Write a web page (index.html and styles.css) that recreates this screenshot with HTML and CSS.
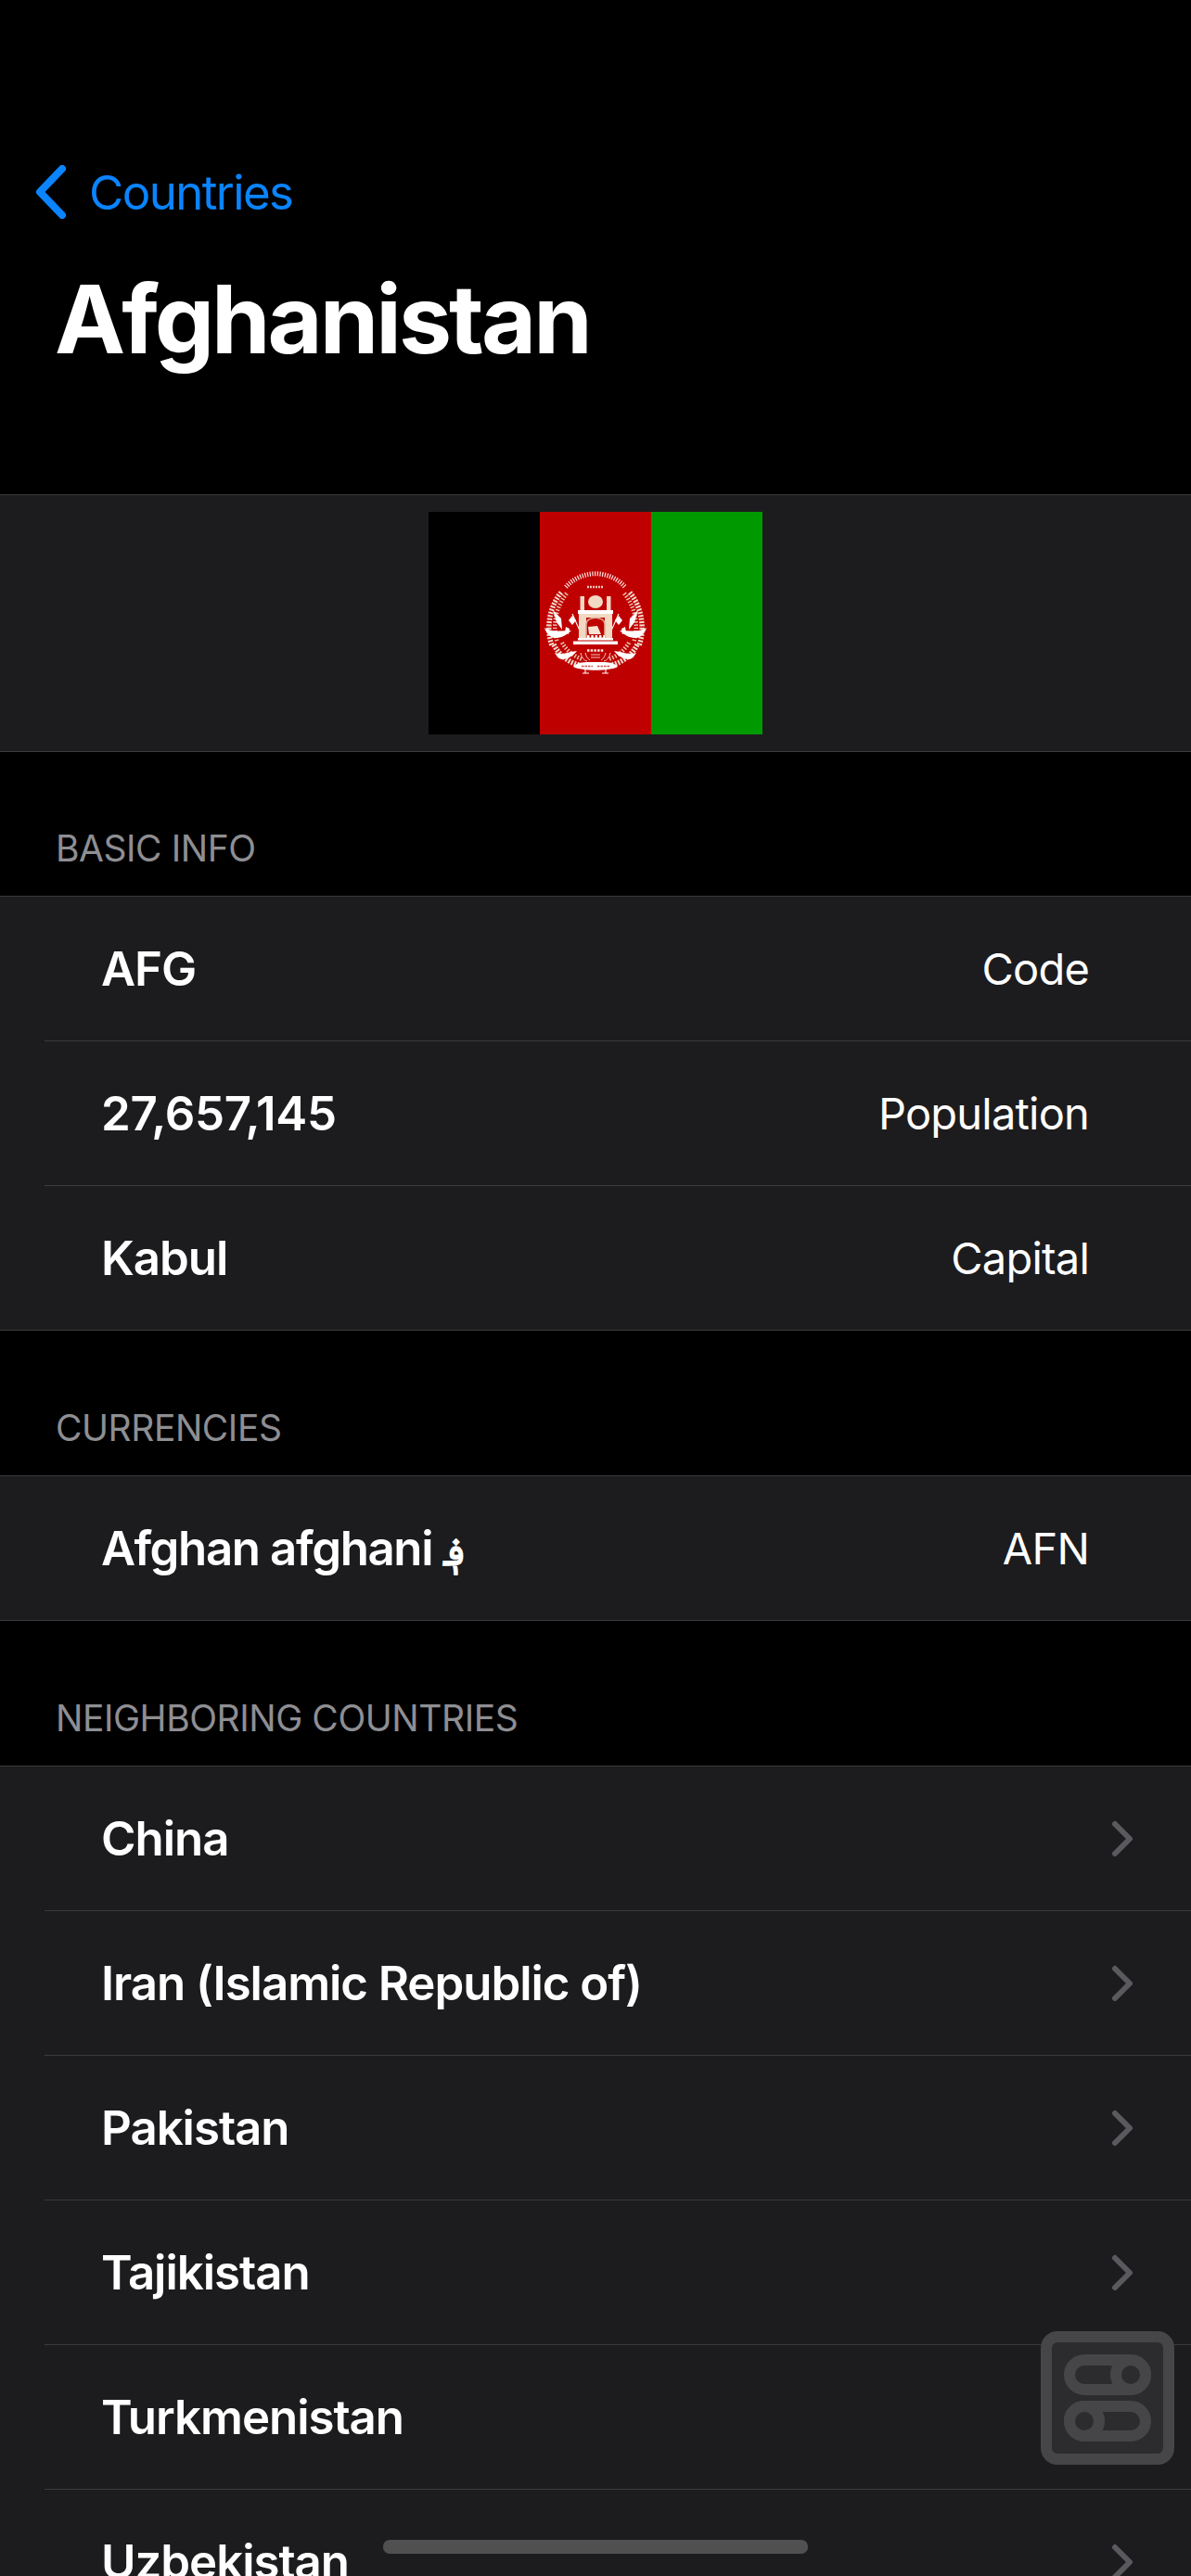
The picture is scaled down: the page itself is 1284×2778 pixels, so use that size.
FILE: index.html
```html
<!DOCTYPE html>
<html lang="en">
<head>
<meta charset="utf-8">
<title>Afghanistan</title>
<link rel="stylesheet" href="styles.css">
</head>
<body>
<div class="page">
  <nav class="nav">
    <svg class="back-icon" viewBox="0 0 34 58" width="34" height="58"><path d="M29 4 5 29l24 25"/></svg>
    <span class="back-label">Countries</span>
  </nav>
  <h1 class="title">Afghanistan</h1>

  <section class="flag-cell">
    <div class="flag">
      <div class="stripe black"></div>
      <div class="stripe red">
        <svg class="emblem" viewBox="0 0 110 110" width="110" height="110">
          <defs>
            <g id="half">
              <path class="wheat" d="M18 22C6 36 1 60 8 79"/>
              <path class="wheat2" d="M24 23C12 38 8 58 14 76"/>
              <path class="wheat" d="M10 78C16 90 26 97 37 100"/>
              <path class="wheat2" d="M19 76C24 85 32 91 41 94"/>
              <path class="ribbon" d="M9 41 18 50 19 62 13 54Z"/>
              <path class="ribbon" d="M0 60C8 65 18 63 29 63 24 67 20 71 12 71 6 71 2 66 0 60Z"/>
              <path class="ribbon" d="M11 87C18 90 26 86 35 85 32 89 26 94 19 94 15 94 13 90 11 87Z"/>
              <path class="pole" d="M30 45 38 63"/>
              <path class="ribbon" d="M26 52 30 47 34 52 30 57Z"/>
              <path class="ribbon" d="M23 59 27 61 26 67 22 65Z"/>
            </g>
          </defs>
          <use href="#half"/>
          <use href="#half" transform="matrix(-1 0 0 1 110 0)"/>
          <path class="script" d="M23 16A43 43 0 0 1 87 16"/>
          <path class="script-2" d="M46 16H64"/>
          <ellipse class="dome" cx="55" cy="32" rx="8" ry="7"/>
          <rect class="tan" x="38.5" y="26" width="4.5" height="15"/>
          <rect class="tan" x="67" y="26" width="4.5" height="15"/>
          <rect class="white" x="36" y="41" width="38" height="4"/>
          <rect class="tan" x="37" y="45" width="8" height="26"/>
          <rect class="tan" x="65" y="45" width="8" height="26"/>
          <rect class="tan" x="45" y="45" width="20" height="4"/>
          <path class="arch" d="M45 71V56C45 47 65 47 65 56V71Z"/>
          <path class="book" d="M47 59 57 58 61 67 48 67Z"/>
          <path class="checks" d="M46 69.5H65"/>
          <rect class="white" x="36" y="71" width="38" height="2.5"/>
          <rect class="white" x="31" y="74.5" width="48" height="3.5"/>
          <path class="script-small" d="M46 84.5H64"/>
          <path class="pole-fine" d="M39 87C40 92 42 95 46 96M71 87C70 92 68 95 64 96M44 87C45 91 46 93 49 95M66 87C65 91 64 93 61 95M50 89H60M50 92H60"/>
          <path class="scroll" d="M31 102C37 96 44 97 55 97 66 97 73 96 79 102 70 107 40 107 31 102Z"/>
          <path class="scroll-ink" d="M40 101.5H52M57 101.5H71"/>
          <path class="pole" d="M44 105V109M66 105V109M41 109H48M62 109H69"/>
        </svg>
      </div>
      <div class="stripe green"></div>
    </div>
  </section>

  <h2 class="section-title first">BASIC INFO</h2>
  <ul class="list">
    <li class="row"><span class="label">AFG</span><span class="value">Code</span></li>
    <li class="row"><span class="label num">27,657,145</span><span class="value">Population</span></li>
    <li class="row"><span class="label">Kabul</span><span class="value">Capital</span></li>
  </ul>

  <h2 class="section-title">CURRENCIES</h2>
  <ul class="list">
    <li class="row"><span class="label tight">Afghan afghani <span class="sign">؋</span></span><span class="value">AFN</span></li>
  </ul>

  <h2 class="section-title">NEIGHBORING COUNTRIES</h2>
  <ul class="list">
    <li class="row link"><span class="label">China</span><svg class="chevron" viewBox="0 0 24 40" width="24" height="40"><path d="M4 4 20 20 4 36"/></svg></li>
    <li class="row link"><span class="label">Iran (Islamic Republic of)</span><svg class="chevron" viewBox="0 0 24 40" width="24" height="40"><path d="M4 4 20 20 4 36"/></svg></li>
    <li class="row link"><span class="label">Pakistan</span><svg class="chevron" viewBox="0 0 24 40" width="24" height="40"><path d="M4 4 20 20 4 36"/></svg></li>
    <li class="row link"><span class="label">Tajikistan</span><svg class="chevron" viewBox="0 0 24 40" width="24" height="40"><path d="M4 4 20 20 4 36"/></svg></li>
    <li class="row link"><span class="label">Turkmenistan</span><svg class="chevron" viewBox="0 0 24 40" width="24" height="40"><path d="M4 4 20 20 4 36"/></svg></li>
    <li class="row link"><span class="label">Uzbekistan</span><svg class="chevron" viewBox="0 0 24 40" width="24" height="40"><path d="M4 4 20 20 4 36"/></svg></li>
  </ul>

  <svg class="float-icon" viewBox="0 0 144 144" width="144" height="144">
    <rect class="float-box" x="6" y="6" width="132" height="132" rx="12"/>
    <rect class="float-line" x="31" y="31" width="82" height="32" rx="16"/>
    <circle class="float-line knob" cx="97" cy="47" r="16"/>
    <rect class="float-line" x="31" y="81" width="82" height="32" rx="16"/>
    <circle class="float-line knob" cx="47" cy="97" r="16"/>
  </svg>
  <div class="home-indicator"></div>
</div>
</body>
</html>
```
FILE: styles.css
```css
* { box-sizing: border-box; }
html, body { margin: 0; padding: 0; background: #000; }
.page {
  position: relative;
  width: 1284px;
  height: 2778px;
  overflow: hidden;
  background: #000;
  color: #fff;
  font-family: Inter, "DejaVu Sans", sans-serif;
}
.nav {
  display: flex;
  align-items: center;
  height: 60px;
  margin-top: 177px;
  padding-left: 38px;
  gap: 24px;
}
.back-icon path {
  fill: none;
  stroke: #0a84ff;
  stroke-width: 8;
  stroke-linecap: round;
  stroke-linejoin: round;
}
.back-label {
  font-size: 51px;
  letter-spacing: -1.6px;
  color: #0a84ff;
}
.title {
  margin: 45px 0 0 59px;
  height: 251px;
  font-size: 102px;
  line-height: 124px;
  font-weight: 700;
  letter-spacing: -3px;
}
.flag-cell {
  display: flex;
  justify-content: center;
  align-items: center;
  height: 278px;
  background: #1c1c1e;
  border-top: 1px solid #3a3a3c;
  border-bottom: 1px solid #3a3a3c;
}
.flag { display: flex; width: 360px; height: 240px; }
.stripe { flex: 1; display: flex; align-items: center; justify-content: center; }
.black { background: #000; }
.red { background: #bf0000; }
.green { background: #009900; }
.emblem { filter: blur(0.45px); overflow: visible; }
.wheat { fill: none; stroke: #f3ddcf; stroke-width: 5.5; stroke-dasharray: 2 1.4; }
.wheat2 { fill: none; stroke: #e9c4b0; stroke-width: 4.5; stroke-dasharray: 1.5 1.8; }
.ribbon { fill: #fff; stroke: none; }
.pole { fill: none; stroke: #fff; stroke-width: 1.1; }
.pole-fine { fill: none; stroke: #f0c8bd; stroke-width: 1; }
.script { fill: none; stroke: #fbeae6; stroke-width: 5; stroke-dasharray: 1.2 1.5; }
.script-2 { fill: none; stroke: #f0c4b8; stroke-width: 2.4; stroke-dasharray: 2 1; }
.script-small { fill: none; stroke: #fbeae6; stroke-width: 2.4; stroke-dasharray: 2.5 1.2; }
.dome { fill: #f1d9c4; }
.tan { fill: #f1d9c4; }
.white { fill: #fff; }
.arch { fill: #bf0000; stroke: #e2a98f; stroke-width: 1.6; }
.book { fill: #f5e3d4; }
.checks { fill: none; stroke: #fff; stroke-width: 3; stroke-dasharray: 2.5 1.8; }
.scroll { fill: #fff; }
.scroll-ink { fill: none; stroke: #c8504a; stroke-width: 1.6; stroke-dasharray: 2.5 1; }
.section-title {
  display: flex;
  align-items: flex-end;
  height: 156px;
  margin: 0;
  padding: 0 0 28px 60px;
  font-size: 39px;
  line-height: 47px;
  font-weight: 400;
  letter-spacing: -0.45px;
  color: #8e8e93;
}
.section-title.first { height: 155px; }
.list {
  list-style: none;
  margin: 0;
  padding: 0;
  background: #1c1c1e;
  border-top: 1px solid #3a3a3c;
  border-bottom: 1px solid #3a3a3c;
}
.row {
  position: relative;
  display: flex;
  align-items: center;
  justify-content: space-between;
  height: 156px;
  margin-left: 48px;
  padding: 0 110px 0 61px;
  border-bottom: 1px solid #3a3a3c;
}
.row:last-child { border-bottom: 0; height: 155px; }
.row.link { padding-right: 62px; }
.label {
  font-size: 51px;
  font-weight: 600;
  letter-spacing: -1.05px;
}
.label.num { letter-spacing: -0.3px; }
.label.tight { letter-spacing: -1.4px; }
.sign { font-size: 42px; }
.value {
  font-size: 47px;
  font-weight: 400;
  letter-spacing: -0.8px;
}
.chevron path {
  fill: none;
  stroke: #5a5a5e;
  stroke-width: 6;
  stroke-linecap: round;
  stroke-linejoin: round;
}
.float-icon {
  position: absolute;
  left: 1122px;
  top: 2514px;
}
.float-box { fill: #2c2c2e; stroke: #464648; stroke-width: 12; }
.float-line { fill: none; stroke: #464648; stroke-width: 12; }
.knob { fill: #2c2c2e; }
.home-indicator {
  position: absolute;
  left: 413px;
  top: 2739px;
  width: 458px;
  height: 15px;
  border-radius: 7px;
  background: #505050;
}
```
